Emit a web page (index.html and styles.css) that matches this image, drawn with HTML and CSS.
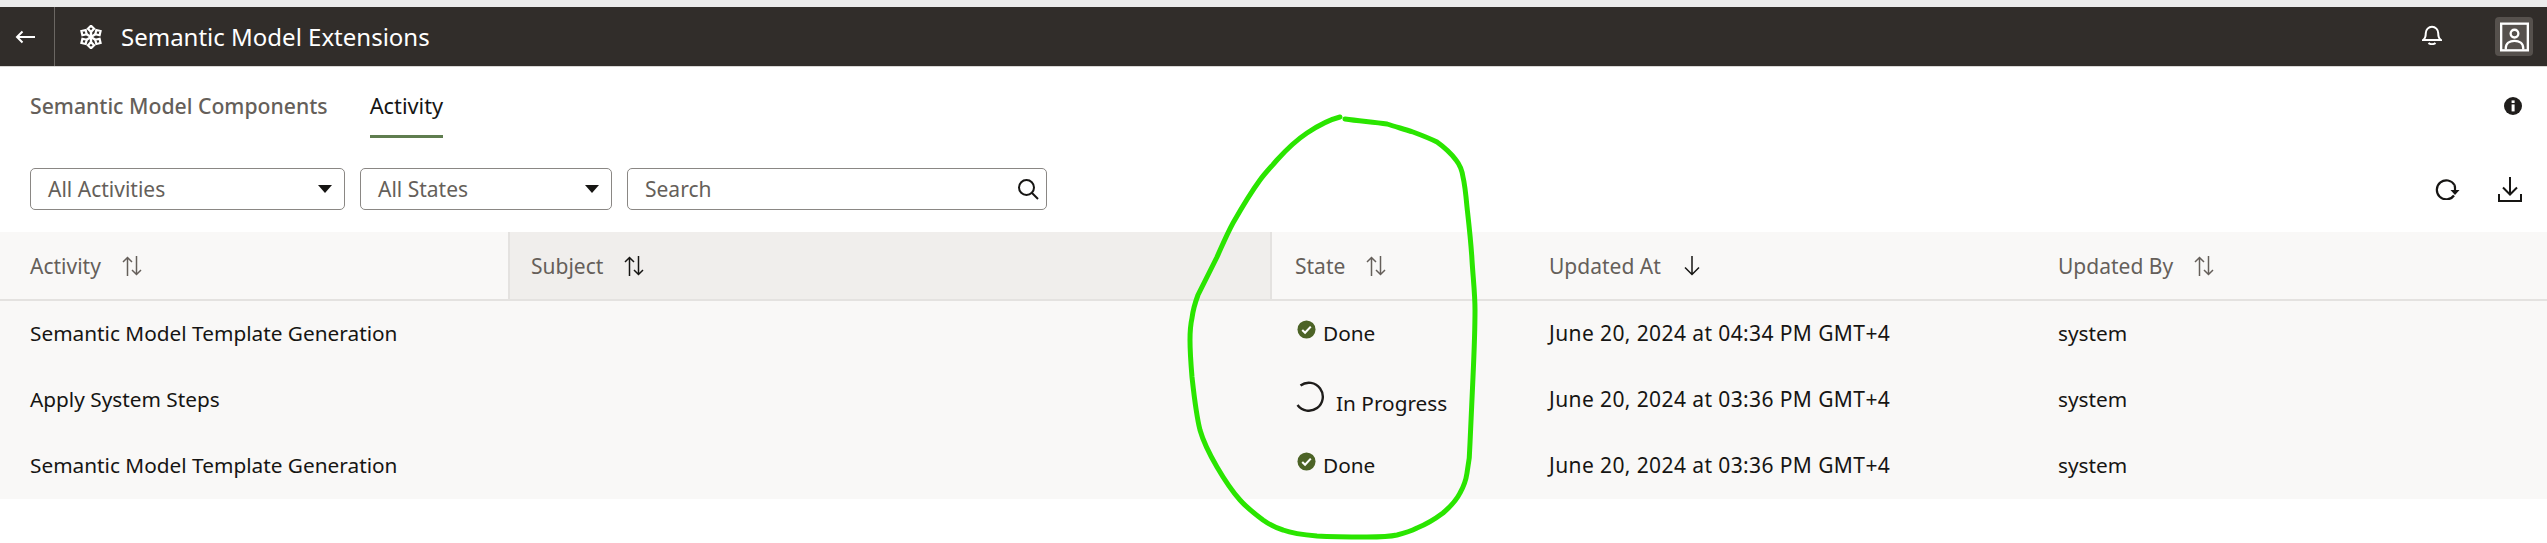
FILE: index.html
```html
<!DOCTYPE html>
<html lang="en">
<head>
<meta charset="utf-8">
<title>Semantic Model Extensions</title>
<link rel="stylesheet" href="styles.css">
</head>
<body>
<div class="page">
  <header class="topbar">
    <button class="back" aria-label="Back">
      <svg class="ic-back" viewBox="0 0 20 14"><path d="M20 7H2M7.500 1.500 2 7l5.500 5.500" fill="none" stroke="#fff" stroke-width="2"/></svg>
    </button>
    <div class="brand">
      <svg class="ic-snow" viewBox="-12 -12 24 24">
        <defs>
          <g id="arm"><path d="M0 0V-6" stroke="#fff" stroke-width="2.400"/><path d="M0-11.300l3.100 3.100L0-5.100l-3.100-3.100z" fill="none" stroke="#fff" stroke-width="2.200"/></g>
        </defs>
        <use href="#arm"/>
        <use href="#arm" transform="rotate(58)"/>
        <use href="#arm" transform="rotate(122)"/>
        <use href="#arm" transform="rotate(180)"/>
        <use href="#arm" transform="rotate(238)"/>
        <use href="#arm" transform="rotate(302)"/>
      </svg>
      <span class="title">Semantic Model Extensions</span>
    </div>
    <div class="top-actions">
      <svg class="ic-bell" viewBox="0 0 20 21"><path d="M1 16c2.500-1.500 2.800-4 2.800-7a6.200 6.200 0 0 1 12.400 0c0 3 .3 5.500 2.800 7zM6.500 19c1.500 1.500 5.500 1.500 7 0" fill="none" stroke="#fff" stroke-width="2"/></svg>
      <div class="avatar">
        <svg viewBox="0 0 30 30"><rect x="1.200" y="1.200" width="27.600" height="27.600" fill="none" stroke="#fff" stroke-width="2.400"/><circle cx="15" cy="11.500" r="4" fill="none" stroke="#fff" stroke-width="2.400"/><path d="M6 28v-1.500c0-5 4-7.500 9-7.500s9 2.500 9 7.500V28" fill="none" stroke="#fff" stroke-width="2.400"/></svg>
      </div>
    </div>
  </header>

  <nav class="tabs">
    <span class="tab">Semantic Model Components</span>
    <span class="tab active">Activity</span>
    <svg class="ic-info" viewBox="0 0 18 18"><circle cx="9" cy="9" r="9" fill="#1f1d1b"/><rect x="7.600" y="7.400" width="3" height="7" fill="#fff"/><rect x="7.600" y="3.400" width="3" height="2.600" fill="#fff"/></svg>
  </nav>

  <div class="toolbar">
    <div class="field wide"><span>All Activities</span><i class="caret"></i></div>
    <div class="field narrow"><span>All States</span><i class="caret"></i></div>
    <div class="field search"><span>Search</span>
      <svg class="ic-search" viewBox="0 0 22 22"><circle cx="9.500" cy="9.500" r="7.500" fill="none" stroke="#161513" stroke-width="2"/><path d="M15 15l6 6" stroke="#161513" stroke-width="2"/></svg>
    </div>
    <div class="tools">
      <svg class="ic-refresh" viewBox="0 0 25 21"><path d="M19.500 6A9.500 9.500 0 1 0 19 16.500" fill="none" stroke="#161513" stroke-width="2.200"/><path d="M15.500 11h9l-4.500 5z" fill="#161513"/><path d="M19.500 6c.6 1.500.6 3.500.5 5" fill="none" stroke="#161513" stroke-width="2.200"/></svg>
      <svg class="ic-download" viewBox="0 0 24 25"><path d="M12 0v17M5 10.500l7 7 7-7M1 17v7h22v-7" fill="none" stroke="#161513" stroke-width="2"/></svg>
    </div>
  </div>

  <section class="table">
    <div class="row head">
      <div class="cell">Activity<svg class="sort"><use href="#sortboth"/></svg></div>
      <div class="cell hot">Subject<svg class="sort dark"><use href="#sortboth"/></svg></div>
      <div class="cell">State<svg class="sort"><use href="#sortboth"/></svg></div>
      <div class="cell">Updated At<svg class="sort dark"><use href="#sortdown"/></svg></div>
      <div class="cell">Updated By<svg class="sort"><use href="#sortboth"/></svg></div>
    </div>
    <div class="row">
      <div class="cell">Semantic Model Template Generation</div>
      <div class="cell"></div>
      <div class="cell state"><svg class="ic-done"><use href="#done"/></svg>Done</div>
      <div class="cell date">June 20, 2024 at 04:34 PM GMT+4</div>
      <div class="cell">system</div>
    </div>
    <div class="row">
      <div class="cell">Apply System Steps</div>
      <div class="cell"></div>
      <div class="cell state progress"><svg class="ic-spin" viewBox="0 0 30 32"><path d="M4.500 5.500A14 14 0 1 1 1.500 25" fill="none" stroke="#1f1d1b" stroke-width="2.400"/></svg><span>In Progress</span></div>
      <div class="cell date">June 20, 2024 at 03:36 PM GMT+4</div>
      <div class="cell">system</div>
    </div>
    <div class="row">
      <div class="cell">Semantic Model Template Generation</div>
      <div class="cell"></div>
      <div class="cell state"><svg class="ic-done"><use href="#done"/></svg>Done</div>
      <div class="cell date">June 20, 2024 at 03:36 PM GMT+4</div>
      <div class="cell">system</div>
    </div>
  </section>

  <svg class="defs" width="0" height="0">
    <symbol id="sortboth" viewBox="0 0 20 20"><path d="M5.500 20V1.500M1 6l4.500-4.500L10 6M14.500 0v18.500M10 14l4.500 4.500L19 14" fill="none" stroke="currentColor" stroke-width="1.500"/></symbol>
    <symbol id="sortdown" viewBox="0 0 20 20"><path d="M10 0v18.500M3 11.500l7 7 7-7" fill="none" stroke="currentColor" stroke-width="1.500"/></symbol>
    <symbol id="done" viewBox="0 0 20 20"><circle cx="10" cy="10" r="9.500" fill="#4c6326"/><path d="M5.500 10.500l3 3 6-6.500" fill="none" stroke="#fff" stroke-width="2.200"/></symbol>
  </svg>

  <svg class="scribble" viewBox="0 0 2547 543">
    <path d="M1340 117C1328 120 1316 127 1307 133C1295 141 1286 150 1277 160C1271 167 1265 173 1260 180C1249 195 1241 209 1233 223C1227 234 1222 246 1217 257C1210 271 1204 283 1198 295C1195 303 1193 310 1192 318C1190 327 1190 333 1190 340C1190 353 1191 365 1192 377C1194 395 1196 414 1200 430C1204 444 1210 455 1217 467C1224 479 1231 490 1240 500C1247 508 1255 514 1263 520C1270 525 1276 528 1283 530C1294 534 1305 535 1317 536C1334 537 1350 537 1367 537C1378 537 1388 537 1397 535C1405 533 1411 531 1417 528C1427 524 1435 519 1443 513C1450 507 1456 501 1460 493C1464 486 1466 480 1467 473C1469 463 1470 453 1470 443C1471 421 1472 399 1473 377C1474 355 1475 332 1475 310C1475 294 1473 277 1472 260C1471 242 1469 225 1467 207C1466 196 1465 185 1463 177C1462 170 1460 165 1456 160C1450 152 1444 147 1437 142C1429 138 1421 135 1413 132C1404 129 1396 127 1387 124C1373 122 1359 121 1345 119" fill="none" stroke="#2ae500" stroke-width="5" stroke-linecap="round"/>
  </svg>
</div>
</body>
</html>
```

FILE: styles.css
```css
* { box-sizing: border-box; }
html, body { margin: 0; padding: 0; background: #fff; }
body { font-family: "Noto Sans", "Open Sans", sans-serif; color: #161513; overflow: hidden; }
.page { position: relative; width: 2547px; height: 543px; padding-top: 7px; background: #fff; }
.page::before { content: ""; position: absolute; left: 0; right: 0; top: 0; height: 7px; background: #ebebeb; }

.topbar { display: flex; align-items: center; height: 60px; background: #312d2a; border-bottom: 1px solid #d8d6d4; color: #fff; }
.back { display: flex; align-items: center; width: 55px; height: 100%; padding: 0 0 0 15px; background: none; border: 0; border-right: 1px solid #6b6763; }
.ic-back { width: 20px; height: 14px; }
.brand { display: flex; align-items: center; gap: 18px; margin-left: 24px; }
.ic-snow { width: 24px; height: 24px; }
.title { font-size: 24px; line-height: 30px; color: #fff; }
.top-actions { display: flex; align-items: center; gap: 53px; margin-left: auto; padding-right: 14px; }
.ic-bell { width: 20px; height: 21px; margin-top: -5px; }
.avatar { display: flex; align-items: center; justify-content: center; width: 38px; height: 39px; border-radius: 4px; background: #56514d; }
.avatar svg { width: 29px; height: 30px; }

.tabs { display: flex; align-items: flex-start; gap: 42px; height: 101px; padding: 25px 25px 0 30px; }
.tab { display: block; height: 46px; font-size: 21.200px; font-weight: 500; line-height: 28px; color: #655f5a; }
.tab.active { font-size: 21.800px; font-weight: 400; color: #161513; border-bottom: 3px solid #5f7d4f; }
.ic-info { width: 18px; height: 18px; margin: 5px 0 0 auto; }

.toolbar { display: flex; align-items: center; gap: 15px; height: 42px; padding: 0 25px 0 30px; }
.field { display: flex; align-items: center; justify-content: space-between; height: 42px; padding: 0 12px 0 17px; background: #fff; border: 1px solid #8a8784; border-radius: 5px; font-size: 21px; color: #655f5a; }
.wide { width: 315px; }
.narrow { width: 252px; }
.search { width: 420px; padding-right: 7px; }
.caret { width: 0; height: 0; border-left: 7px solid transparent; border-right: 7px solid transparent; border-top: 8px solid #161513; }
.ic-search { width: 22px; height: 22px; }
.tools { display: flex; align-items: center; gap: 38px; margin-left: auto; }
.ic-refresh { width: 25px; height: 21px; }
.ic-download { width: 24px; height: 25px; }

.table { margin-top: 22px; }
.row { display: grid; grid-template-columns: 510px 762px 277px 509px 1fr; height: 66px; background: #f9f8f7; font-size: 20.800px; }
.row.head { height: 69px; border-bottom: 2px solid #e4e2e0; font-size: 21px; color: #655f5a; }
.row:not(.head) .cell { padding-bottom: 2px; }
.cell { display: flex; align-items: center; padding-left: 30px; white-space: nowrap; }
.cell:nth-child(2) { padding-left: 21px; }
.cell:nth-child(3) { padding-left: 23px; }
.cell:nth-child(4) { padding-left: 0; }
.cell:nth-child(5) { padding-left: 0; }
.date { font-size: 21px; letter-spacing: 0.400px; }
.head .cell:nth-child(1) { border-right: 2px solid #e4e2e0; }
.head .hot { background: #f0eeec; border-right: 2px solid #e4e2e0; }
.sort { width: 20px; height: 20px; margin-left: 21px; color: #655f5a; }
.sort.dark { color: #161513; }
.state { gap: 7px; }
.ic-done { width: 19px; height: 19px; margin: -7px 0 0 2px; }
.progress { gap: 10px; }
.progress span { margin-top: 8px; }
.ic-spin { width: 30px; height: 32px; margin: -6px 0 0 1px; }
.defs { position: absolute; }
.scribble { position: absolute; left: 0; top: 0; width: 2547px; height: 543px; pointer-events: none; }
```
